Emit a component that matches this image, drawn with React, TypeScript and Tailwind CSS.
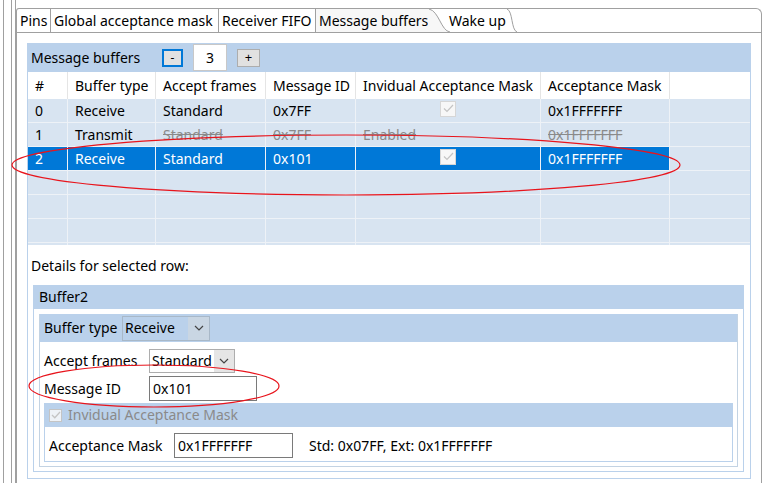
import React from "react";

const cols = [
  { key: "n", label: "#", w: "w-[40px]" },
  { key: "type", label: "Buffer type", w: "w-[88px]" },
  { key: "frames", label: "Accept frames", w: "w-[110px]" },
  { key: "id", label: "Message ID", w: "w-[90px]" },
  { key: "ind", label: "Invidual Acceptance Mask", w: "w-[185px]" },
  { key: "mask", label: "Acceptance Mask", w: "w-[129px]" },
];

type Row = {
  n: string;
  type: string;
  frames: string;
  id: string;
  ind: "check" | "Enabled" | "";
  mask: string;
  disabled?: boolean;
  selected?: boolean;
};

const rows: Row[] = [
  { n: "0", type: "Receive", frames: "Standard", id: "0x7FF", ind: "check", mask: "0x1FFFFFFF" },
  { n: "1", type: "Transmit", frames: "Standard", id: "0x7FF", ind: "Enabled", mask: "0x1FFFFFFF", disabled: true },
  { n: "2", type: "Receive", frames: "Standard", id: "0x101", ind: "check", mask: "0x1FFFFFFF", selected: true },
];

function Check({ className = "" }: { className?: string }) {
  return (
    <div className={`w-[16px] h-[16px] bg-[#f7f7f7] border border-[#d6d6d6] flex items-center justify-center ${className}`}>
      <svg width="11" height="9" viewBox="0 0 11 9">
        <path d="M1 4.5 L4 7.5 L10 1" fill="none" stroke="#c4c4c4" strokeWidth="1.2" />
      </svg>
    </div>
  );
}

function Chevron() {
  return (
    <svg width="10" height="6" viewBox="0 0 10 6">
      <path d="M1 1 L5 5 L9 1" fill="none" stroke="#444" strokeWidth="1.2" />
    </svg>
  );
}

export default function App() {
  return (
    <div className="w-[766px] h-[483px] bg-white relative overflow-hidden flex text-[14px] text-black font-['Segoe_UI','Noto_Sans',sans-serif] leading-none">
      {/* window edges on the left */}
      <div className="w-[3px]" />
      <div className="w-px bg-[#a0a0a0]" />
      <div className="w-[7px]" />
      <div className="w-px bg-[#a0a0a0]" />
      <div className="w-[3px]" />
      <div className="w-px bg-[#a0a0a0]" />

      {/* Tab folder */}
      <div className="mt-[8px] w-[746px] h-[480px] border border-b-0 border-[#a0a0a0] rounded-tr-[6px] rounded-tl-[3px] flex flex-col">
        <div className="flex h-[24px] border-b border-[#a0a0a0] shrink-0">
          <div className="w-[34px] pl-[3px] border-r border-[#a0a0a0] flex items-center whitespace-nowrap">Pins</div>
          <div className="w-[168px] pl-[3px] border-r border-[#a0a0a0] flex items-center whitespace-nowrap">Global acceptance mask</div>
          <div className="w-[97px] pl-[3px] border-r border-[#a0a0a0] flex items-center whitespace-nowrap">Receiver FIFO</div>
          <div className="w-[112px] pl-[3px] bg-[#f7f7f7] flex items-center whitespace-nowrap shrink-0">Message buffers</div>
          <svg width="22" height="23" viewBox="0 0 22 23" className="shrink-0">
            <path d="M0 0 L0 23 L22 23 C14 22 12 3 2 0 Z" fill="#f7f7f7" />
            <path d="M1 0 C11 2 13 22 22 23" fill="none" stroke="#a0a0a0" />
          </svg>
          <div className="w-[63px] pl-[5px] flex items-center -ml-[6px] whitespace-nowrap shrink-0">Wake up</div>
          <svg width="10" height="23" viewBox="0 0 10 23" className="shrink-0">
            <path d="M0 0 C6 2 4 21 10 23" fill="none" stroke="#a0a0a0" />
          </svg>
          <div className="flex-1" />
        </div>

        {/* Content */}
        <div className="pl-[10px] pt-[10px]">
          <div className="w-[724px] h-[436px] border border-t-0 border-[#bad1eb] flex flex-col">
            {/* Message buffers header */}
            <div className="h-[29px] bg-[#bad1eb] flex items-center shrink-0">
              <span className="pl-[3px] w-[134px]">Message buffers</span>
              <div className="w-[21px] h-[18px] border-2 border-[#0078d7] bg-[#e1e1e1] flex items-center justify-center text-[12px]">-</div>
              <div className="ml-[10px] w-[34px] h-[27px] bg-white border border-[#c8c8c8] flex items-center justify-center">3</div>
              <div className="ml-[10px] w-[23px] h-[18px] bg-[#e1e1e1] border border-[#adadad] flex items-center justify-center text-[13px]">+</div>
            </div>

            {/* Column headers */}
            <div className="h-[27px] bg-white flex shrink-0">
              {cols.map((c) => (
                <div key={c.key} className={`${c.w} border-r border-[#e5e5e5] flex items-center pl-[7px] shrink-0 whitespace-nowrap`}>
                  {c.label}
                </div>
              ))}
            </div>

            {/* Rows */}
            {[0, 1, 2, 3, 4, 5].map((i) => {
              const r = rows[i];
              return (
                <div key={i} className="h-[24px] flex bg-[#d8e4f1] border-b border-[#eef2f7] shrink-0">
                  {cols.map((c) => {
                    const sel = r?.selected;
                    const dis = r?.disabled && c.key !== "n" && c.key !== "type";
                    const val = r ? (r as any)[c.key] : "";
                    return (
                      <div
                        key={c.key}
                        className={`${c.w} border-r border-[#eef2f7] flex items-center pl-[7px] shrink-0 whitespace-nowrap ${sel ? "bg-[#0078d7] text-white" : ""} ${dis ? "text-[#8a8a8a] line-through" : ""}`}
                      >
                        {val === "check" ? <Check className="ml-[77px] mb-[4px]" /> : val}
                      </div>
                    );
                  })}
                </div>
              );
            })}
            <div className="h-[2px] flex bg-[#d8e4f1] shrink-0">
              {cols.map((c) => (
                <div key={c.key} className={`${c.w} border-r border-[#eef2f7] shrink-0`} />
              ))}
            </div>

            {/* Details */}
            <div className="pl-[3px] mt-[11px] h-[20px] flex items-center">Details for selected row:</div>

            <div className="ml-[5px] mt-[9px] w-[711px] border border-t-0 border-[#bad1eb] pb-[4px]">
              <div className="h-[24px] bg-[#bad1eb] flex items-center pl-[5px]">Buffer2</div>
              <div className="ml-[5px] mt-[5px] w-[699px] border border-t-0 border-[#c3d3e3] pb-[4px]">
                <div className="h-[28px] bg-[#bad1eb] flex items-center pl-[4px]">
                  <span className="w-[78px] whitespace-nowrap">Buffer type</span>
                  <div className="w-[88px] h-[25px] border border-[#a8b8c8] bg-[#bad1eb] flex">
                    <span className="flex-1 flex items-center pl-[2px]">Receive</span>
                    <span className="w-[21px] bg-[#c9d6e3] flex items-center justify-center">
                      <Chevron />
                    </span>
                  </div>
                </div>

                <div className="mt-[7px] flex items-center pl-[4px]">
                  <span className="w-[105px] whitespace-nowrap">Accept frames</span>
                  <div className="w-[86px] h-[24px] border border-[#adadad] bg-white flex">
                    <span className="flex-1 flex items-center pl-[2px]">Standard</span>
                    <span className="w-[20px] bg-[#e5e5e5] flex items-center justify-center">
                      <Chevron />
                    </span>
                  </div>
                </div>

                <div className="mt-[3px] flex items-center pl-[4px]">
                  <span className="w-[105px]">Message ID</span>
                  <div className="w-[108px] h-[25px] border border-[#7a7a7a] bg-white flex items-center pl-[3px]">0x101</div>
                </div>

                <div className="ml-[4px] mt-[2px] w-[689px] border border-t-0 border-[#bad1eb] pb-[3px]">
                  <div className="h-[24px] bg-[#bad1eb] flex items-center pl-[4px] text-[#8a8a8a]">
                    <div className="w-[13px] h-[13px] border border-[#c4c4c4] bg-[#eef2f7] flex items-center justify-center">
                      <svg width="10" height="8" viewBox="0 0 10 8">
                        <path d="M1 4 L3.8 6.8 L9 1" fill="none" stroke="#c4c4c4" strokeWidth="1.3" />
                      </svg>
                    </div>
                    <span className="ml-[6px]">Invidual Acceptance Mask</span>
                  </div>
                  <div className="mt-[6px] flex items-center pl-[4px]">
                    <span className="w-[125px] whitespace-nowrap">Acceptance Mask</span>
                    <div className="w-[119px] h-[25px] border border-[#7a7a7a] bg-white flex items-center pl-[3px]">0x1FFFFFFF</div>
                    <span className="ml-[16px]">Std: 0x07FF, Ext: 0x1FFFFFFF</span>
                  </div>
                </div>
              </div>
            </div>
          </div>
        </div>
      </div>

      {/* annotation ellipses */}
      <svg className="absolute inset-0 pointer-events-none" width="766" height="483">
        <ellipse cx="346" cy="165" rx="334" ry="30" fill="none" stroke="#e8141c" strokeWidth="1.2" />
        <ellipse cx="154" cy="386" rx="125" ry="21" fill="none" stroke="#e8141c" strokeWidth="1.2" />
      </svg>
    </div>
  );
}
